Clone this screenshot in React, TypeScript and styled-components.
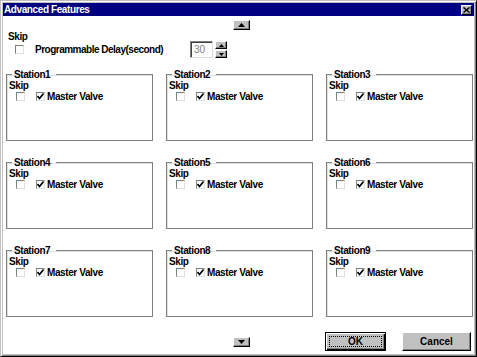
import styled, { createGlobalStyle } from "styled-components";

const GlobalStyle = createGlobalStyle`
  html, body {
    margin: 0;
    padding: 0;
    background: #fff;
  }
  body {
    font-family: "Liberation Sans", Arial, sans-serif;
  }
`;

const textStyle = `
  font-family: "Liberation Sans", Arial, sans-serif;
  font-weight: bold;
  font-size: 10px;
  letter-spacing: -0.4px;
  color: #000;
`;

const raised = `
  box-sizing: border-box;
  background: #c0c0c0;
  border: 1px solid;
  border-color: #fff #000 #000 #fff;
  box-shadow: inset -1px -1px 0 #808080;
`;

const Window = styled.div`
  box-sizing: border-box;
  width: 477px;
  height: 357px;
  border: 1px solid;
  border-color: #c0c0c0 #000 #000 #c0c0c0;
  box-shadow: inset 1px 1px 0 #fff, inset -1px -1px 0 #808080;
  padding: 2px;
  background: #c0c0c0;
  display: flex;
  flex-direction: column;
`;

const TitleBar = styled.div`
  ${textStyle}
  color: #fff;
  height: 13px;
  line-height: 13px;
  background: #000080;
  padding-left: 1px;
  display: flex;
  align-items: center;
  justify-content: space-between;
`;

const CloseButton = styled.div`
  ${raised}
  width: 11px;
  height: 10px;
  margin-right: 2px;
  display: flex;
  align-items: center;
  justify-content: center;
`;

const Body = styled.div`
  flex: 1;
  background: #fff;
  padding: 4px 0 0 3px;
  display: flex;
  flex-direction: column;
`;

const ColumnsRow = styled.div<{ $align?: string }>`
  display: grid;
  grid-template-columns: repeat(3, 147px);
  column-gap: 13px;
  align-items: ${(p) => p.$align || "start"};
`;

const ArrowButton = styled.div`
  ${raised}
  grid-column: 2;
  justify-self: center;
  margin-left: 3px;
  width: 17px;
  height: 10px;
  display: flex;
  align-items: center;
  justify-content: center;
`;

const SkipLabel = styled.div`
  ${textStyle}
  line-height: 10px;
  margin-left: 2px;
`;

const TopSkip = styled(SkipLabel)`
  margin-top: 2px;
`;

const DelayRow = styled.div`
  display: flex;
  align-items: center;
  height: 17px;
  margin-left: 9px;
  margin-top: -1px;
`;

const Label = styled.span`
  ${textStyle}
  line-height: 11px;
  white-space: nowrap;
`;

const DelayLabel = styled(Label)`
  margin-left: 11px;
  width: 155px;
  letter-spacing: -0.5px;
`;

const CheckBox = styled.span`
  box-sizing: border-box;
  width: 9px;
  height: 9px;
  flex: none;
  border: 1px solid;
  border-color: #808080 #dfdfdf #dfdfdf #808080;
  background: #fff;
  display: inline-flex;
  align-items: center;
  justify-content: center;
`;

const SpinInput = styled.div`
  box-sizing: border-box;
  width: 23px;
  height: 17px;
  border: 1px solid;
  border-color: #808080 #dfdfdf #dfdfdf #808080;
  box-shadow: inset 1px 1px 0 #404040;
  font-family: "Liberation Sans", Arial, sans-serif;
  font-size: 10px;
  color: #808080;
  padding-left: 3px;
  line-height: 15px;
`;

const SpinButtons = styled.div`
  display: flex;
  flex-direction: column;
  gap: 1px;
  margin-left: 2px;
`;

const SpinButton = styled.div`
  ${raised}
  width: 12px;
  height: 8px;
  display: flex;
  align-items: center;
  justify-content: center;
`;

const Stations = styled.div`
  display: grid;
  grid-template-columns: repeat(3, 147px);
  grid-auto-rows: 72px;
  column-gap: 13px;
  row-gap: 16px;
  margin-top: 11px;
`;

const Group = styled.fieldset`
  box-sizing: border-box;
  margin: 0;
  padding: 0 0 0 1px;
  border: 1px solid #808080;
  box-shadow: inset 1px 1px 0 #e0e0e0;
  min-width: 0;
`;

const Legend = styled.legend`
  ${textStyle}
  line-height: 11px;
  margin-left: 4px;
  padding: 0 6px 0 2px;
`;

const StationSkip = styled(SkipLabel)`
  margin-left: 1px;
  margin-top: 1px;
`;

const StationRow = styled.div`
  display: flex;
  align-items: center;
  height: 11px;
  margin-left: 8px;
`;

const ValveBox = styled(CheckBox)`
  margin-left: 11px;
  margin-right: 2px;
`;

const Footer = styled(ColumnsRow)`
  margin-top: 15px;
  height: 19px;
`;

const DialogButtons = styled.div`
  grid-column: 3;
  display: flex;
  gap: 16px;
  margin-left: -1px;
`;

const PushButton = styled.div<{ $width: number }>`
  ${raised}
  ${textStyle}
  letter-spacing: 0;
  width: ${(p) => p.$width}px;
  height: 19px;
  display: flex;
  align-items: center;
  justify-content: center;
`;

const DefaultButton = styled(PushButton)`
  border: 1px solid #000;
  box-shadow: inset 1px 1px 0 #fff, inset -1px -1px 0 #000, inset -2px -2px 0 #808080;
  padding: 3px;
`;

const FocusRing = styled.span`
  box-sizing: border-box;
  flex: 1;
  align-self: stretch;
  border: 1px dotted #000;
  display: flex;
  align-items: center;
  justify-content: center;
`;

function Check() {
  return (
    <svg width="7" height="7" viewBox="0 0 7 7">
      <polyline points="0.5,3 2.5,5.5 6.5,0.5" fill="none" stroke="#000" strokeWidth="1.6" />
    </svg>
  );
}

function Triangle({ up, size }: { up: boolean; size: number }) {
  const h = size / 2 + 0.5;
  return (
    <svg width={size} height={h} viewBox={`0 0 ${size} ${h}`}>
      <polygon points={up ? `0,${h} ${size / 2},0 ${size},${h}` : `0,0 ${size / 2},${h} ${size},0`} fill="#000" />
    </svg>
  );
}

function Station({ n }: { n: number }) {
  return (
    <Group>
      <Legend>Station{n}</Legend>
      <StationSkip>Skip</StationSkip>
      <StationRow>
        <CheckBox />
        <ValveBox>
          <Check />
        </ValveBox>
        <Label>Master Valve</Label>
      </StationRow>
    </Group>
  );
}

export default function App() {
  const stations = [1, 2, 3, 4, 5, 6, 7, 8, 9];
  return (
    <>
      <GlobalStyle />
      <Window>
        <TitleBar>
          <span>Advanced Features</span>
          <CloseButton>
            <svg width="7" height="6" viewBox="0 0 7 6">
              <path d="M0.5 0.5 L6.5 5.5 M6.5 0.5 L0.5 5.5" stroke="#000" strokeWidth="1.5" />
            </svg>
          </CloseButton>
        </TitleBar>
        <Body>
          <ColumnsRow>
            <ArrowButton>
              <Triangle up size={7} />
            </ArrowButton>
          </ColumnsRow>
          <TopSkip>Skip</TopSkip>
          <DelayRow>
            <CheckBox />
            <DelayLabel>Programmable Delay(second)</DelayLabel>
            <SpinInput>30</SpinInput>
            <SpinButtons>
              <SpinButton>
                <Triangle up size={5} />
              </SpinButton>
              <SpinButton>
                <Triangle up={false} size={5} />
              </SpinButton>
            </SpinButtons>
          </DelayRow>
          <Stations>
            {stations.map((n) => (
              <Station key={n} n={n} />
            ))}
          </Stations>
          <Footer $align="center">
            <ArrowButton>
              <Triangle up={false} size={7} />
            </ArrowButton>
            <DialogButtons>
              <DefaultButton $width={61}>
                <FocusRing>OK</FocusRing>
              </DefaultButton>
              <PushButton $width={69}>Cancel</PushButton>
            </DialogButtons>
          </Footer>
        </Body>
      </Window>
    </>
  );
}
